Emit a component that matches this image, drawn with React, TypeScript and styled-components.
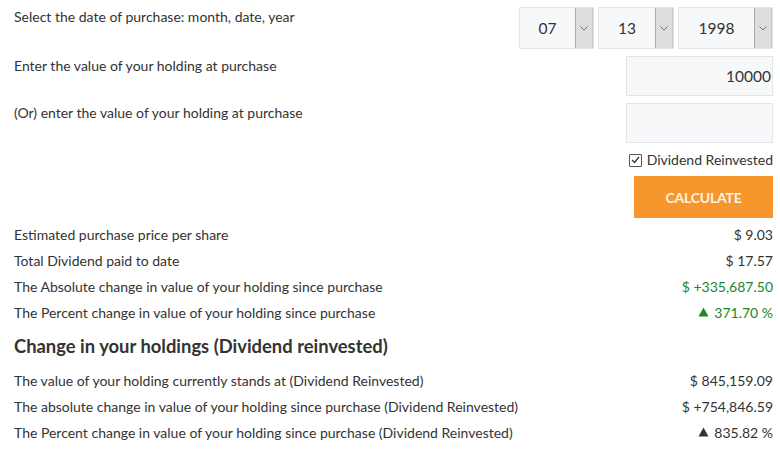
import React from "react";
import styled, { createGlobalStyle } from "styled-components";

const Global = createGlobalStyle`
  html, body { margin: 0; padding: 0; background: #ffffff; }
  body { font-family: Lato, "Open Sans", Arial, sans-serif; color: #333333; }
`;

const Page = styled.div`
  width: 780px;
  box-sizing: border-box;
  padding: 7px 7px 0 14px;
`;

const FormRow = styled.div`
  display: flex;
  justify-content: space-between;
  align-items: flex-start;
  margin-bottom: 7px;
`;

const Label = styled.div`
  font-size: 14px;
  line-height: 20px;
  color: #333;
`;

const Selects = styled.div`
  display: flex;
  gap: 4px;
`;

const SelectBox = styled.div<{ $w: number }>`
  width: ${(p) => p.$w}px;
  height: 42px;
  box-sizing: border-box;
  border: 1px solid #e3e5e8;
  background: #f7f8fa;
  display: flex;
  align-items: stretch;
`;

const SelectValue = styled.div`
  flex: 1;
  display: flex;
  align-items: center;
  justify-content: center;
  font-size: 15.5px;
  color: #333;
`;

const SelectArrow = styled.div`
  width: 16px;
  background: #dddddd;
  border-left: 1px solid #aaaaaa;
  border-right: 1px solid #c8c8c8;
  display: flex;
  align-items: center;
  justify-content: center;
`;

const TextInput = styled.div`
  width: 147px;
  height: 40px;
  box-sizing: border-box;
  border: 1px solid #e3e5e8;
  background: #f7f8fa;
  font-size: 15.5px;
  color: #333;
  display: flex;
  align-items: center;
  justify-content: flex-end;
  padding-right: 1px;
`;

const RightRow = styled.div`
  display: flex;
  justify-content: flex-end;
`;

const CheckLabel = styled.label`
  display: flex;
  align-items: center;
  gap: 5px;
  font-size: 14px;
  line-height: 20px;
  color: #333;
  height: 20px;
  margin-bottom: 6px;
`;

const CheckBox = styled.span`
  width: 11px;
  height: 11px;
  border: 1px solid #555;
  border-radius: 1px;
  display: inline-flex;
  align-items: center;
  justify-content: center;
  background: #fff;
`;

const Button = styled.button`
  width: 139px;
  height: 42px;
  border: none;
  background: #f7962b;
  color: #fdf3e6;
  font-family: Lato, "Open Sans", Arial, sans-serif;
  font-weight: 700;
  font-size: 14px;
  letter-spacing: -0.2px;
  padding: 0;
  margin-bottom: 3px;
`;

const ResultRow = styled.div`
  display: flex;
  justify-content: space-between;
  align-items: center;
  height: 26px;
  font-size: 14px;
`;

const Value = styled.div<{ $green?: boolean }>`
  display: flex;
  align-items: center;
  gap: 5px;
  color: ${(p) => (p.$green ? "#22862a" : "#333")};
`;

const Heading = styled.h3`
  margin: 0;
  height: 42px;
  display: flex;
  align-items: center;
  font-size: 18.4px;
  font-weight: 700;
  color: #333;
`;

const Chevron = () => (
  <svg width="8" height="5" viewBox="0 0 8 5">
    <path d="M0.5 0.5 L4 4 L7.5 0.5" fill="none" stroke="#777" strokeWidth="1" />
  </svg>
);

const UpTriangle = ({ color }: { color: string }) => (
  <svg width="11" height="10" viewBox="0 0 11 10">
    <path d="M5.5 0.5 L10.5 9.5 L0.5 9.5 Z" fill={color} />
  </svg>
);

const Select = ({ value, w }: { value: string; w: number }) => (
  <SelectBox $w={w}>
    <SelectValue>{value}</SelectValue>
    <SelectArrow>
      <Chevron />
    </SelectArrow>
  </SelectBox>
);

type Row = { l: string; v: string; g?: boolean; up?: boolean };

const basic: Row[] = [
  { l: "Estimated purchase price per share", v: "$ 9.03" },
  { l: "Total Dividend paid to date", v: "$ 17.57" },
  { l: "The Absolute change in value of your holding since purchase", v: "$ +335,687.50", g: true },
  { l: "The Percent change in value of your holding since purchase", v: "371.70 %", g: true, up: true },
];

const reinvested: Row[] = [
  { l: "The value of your holding currently stands at (Dividend Reinvested)", v: "$ 845,159.09" },
  { l: "The absolute change in value of your holding since purchase (Dividend Reinvested)", v: "$ +754,846.59" },
  { l: "The Percent change in value of your holding since purchase (Dividend Reinvested)", v: "835.82 %", up: true },
];

const Result = ({ r }: { r: Row }) => (
  <ResultRow>
    <div>{r.l}</div>
    <Value $green={r.g}>
      {r.up && <UpTriangle color={r.g ? "#1f8a25" : "#333"} />}
      <span>{r.v}</span>
    </Value>
  </ResultRow>
);

export default function App() {
  return (
    <>
      <Global />
      <Page>
        <FormRow>
          <Label>Select the date of purchase: month, date, year</Label>
          <Selects>
            <Select value="07" w={75} />
            <Select value="13" w={76} />
            <Select value="1998" w={95} />
          </Selects>
        </FormRow>
        <FormRow>
          <Label>Enter the value of your holding at purchase</Label>
          <TextInput>10000</TextInput>
        </FormRow>
        <FormRow>
          <Label>(Or) enter the value of your holding at purchase</Label>
          <TextInput />
        </FormRow>
        <RightRow>
          <CheckLabel>
            <CheckBox>
              <svg width="9" height="8" viewBox="0 0 9 8">
                <path d="M1 4 L3.5 6.5 L8 1" fill="none" stroke="#333" strokeWidth="1.3" />
              </svg>
            </CheckBox>
            Dividend Reinvested
          </CheckLabel>
        </RightRow>
        <RightRow>
          <Button>CALCULATE</Button>
        </RightRow>
        {basic.map((r) => (
          <Result key={r.l} r={r} />
        ))}
        <Heading>Change in your holdings (Dividend reinvested)</Heading>
        {reinvested.map((r) => (
          <Result key={r.l} r={r} />
        ))}
      </Page>
    </>
  );
}
